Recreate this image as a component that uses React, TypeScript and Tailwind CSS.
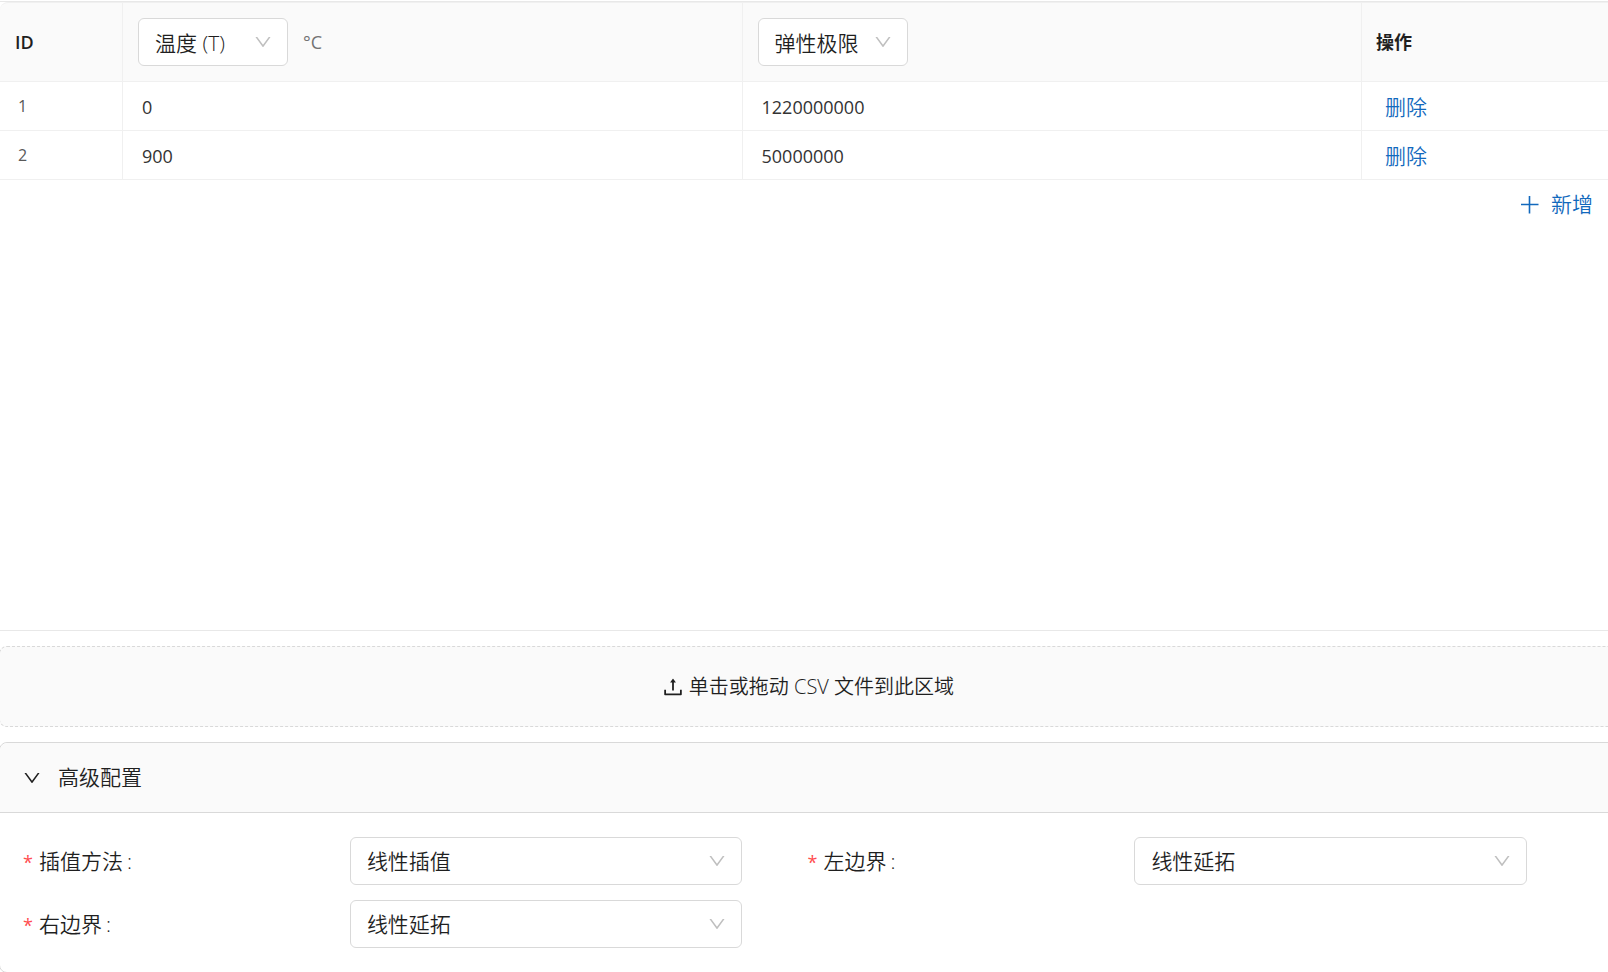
import { AiOutlineDown, AiOutlineUpload } from "react-icons/ai";

const rows = [
    { id: 1, x: "0", y: "1220000000" },
    { id: 2, x: "900", y: "50000000" },
];

interface SelectProps {
    id: string;
    label?: string;
    value: string;
    options: string[];
    className?: string;
}

function Select({ id, label, value, options, className = "" }: SelectProps) {
    return (
        <div className={`relative ${className}`}>
            <select
                id={id}
                aria-label={label}
                defaultValue={value}
                className="h-12 w-full appearance-none rounded-md border border-[#d9d9d9] bg-white pl-4 pr-10 pt-0.5 text-[21px] font-[350] text-[#1f1f1f]"
            >
                {options.map((option) => (
                    <option key={option}>{option}</option>
                ))}
            </select>
            <AiOutlineDown className="pointer-events-none absolute right-[15px] top-[14px] h-5 w-5 text-[#bfbfbf]" />
        </div>
    );
}

function Field({ id, label, value, options }: SelectProps) {
    return (
        <div className="flex items-center">
            <label htmlFor={id} className="flex w-5/12 items-center pt-0.5 text-[21px] font-[350]">
                <span className="mr-1 w-3 text-lg font-normal leading-4 text-[#ff4d4f]">*</span>
                {label}
                <span className="ml-1">:</span>
            </label>
            <Select id={id} value={value} options={options} className="w-1/2" />
        </div>
    );
}

function DataTable() {
    return (
        <table className="w-full table-fixed border-separate border-spacing-0 text-left">
            <colgroup>
                <col className="w-[123px]" />
                <col />
                <col />
                <col className="w-[246px]" />
            </colgroup>
            <thead className="text-lg">
                <tr className="h-20">
                    <th className="rounded-tl-lg border-y border-r border-[#f0f0f0] bg-[#fafafa] pl-[15px] font-semibold">ID</th>
                    <th className="border-y border-r border-[#f0f0f0] bg-[#fafafa] px-[15px] font-normal">
                        <div className="flex items-center gap-[15px]">
                            <Select id="x-axis" label="自变量" value="温度 (T)" options={["温度 (T)"]} className="w-[150px]" />
                            <span className="text-[#737373]">°C</span>
                        </div>
                    </th>
                    <th className="border-y border-r border-[#f0f0f0] bg-[#fafafa] px-[15px] font-normal">
                        <Select id="y-axis" label="因变量" value="弹性极限" options={["弹性极限"]} className="w-[150px]" />
                    </th>
                    <th className="border-y border-[#f0f0f0] bg-[#fafafa] pl-[14px] font-bold">操作</th>
                </tr>
            </thead>
            <tbody>
                {rows.map((row) => (
                    <tr key={row.id} className="h-[49px] text-lg">
                        <td className="border-b border-r border-[#f0f0f0] pl-[18px] text-base text-[#595959]">{row.id}</td>
                        <td className="border-b border-r border-[#f0f0f0] pl-[19px] pt-0.5">
                            <input aria-label={`自变量 ${row.id}`} defaultValue={row.x} className="block w-full text-[#333333]" />
                        </td>
                        <td className="border-b border-r border-[#f0f0f0] pl-[19px] pt-0.5">
                            <input aria-label={`因变量 ${row.id}`} defaultValue={row.y} className="block w-full text-[#333333]" />
                        </td>
                        <td className="border-b border-[#f0f0f0] pl-[23px] pt-0.5">
                            <button className="block text-[21px] font-[350] leading-8 text-[#1269bd]">删除</button>
                        </td>
                    </tr>
                ))}
            </tbody>
        </table>
    );
}

export default function App() {
    return (
        <div className="min-h-screen overflow-hidden bg-white font-['Open_Sans','Noto_Sans_CJK_SC',sans-serif] text-[#1f1f1f]">
            <div className="mt-px min-h-[630px] border-y border-[#e8e8e8]">
                <DataTable />
                <div className="flex justify-end pr-[15px]">
                    <button className="flex h-[50px] items-center gap-3 text-[21px] font-[350] text-[#1269bd]">
                        <svg className="h-[18px] w-[18px]" viewBox="0 0 18 18" fill="none" stroke="currentColor" strokeWidth="1.6">
                            <path d="M8.5 0V17.5M0 8.5H17.5" />
                        </svg>
                        新增
                    </button>
                </div>
            </div>
            {/* Both panels run past the window on each side, so only their left corners show */}
            <div className="-ml-px -mr-2 mt-[15px] flex flex-col gap-[15px]">
                <button className="flex h-[81px] items-center justify-center gap-1 rounded-lg border border-dashed border-[#d9d9d9] bg-[#fafafa] text-[20px] font-[350]">
                    <AiOutlineUpload className="h-6 w-6" />
                    单击或拖动 CSV 文件到此区域
                </button>
                <section className="rounded-lg border border-[#d9d9d9]">
                    <button className="flex h-[70px] w-full items-center gap-4 rounded-t-lg border-b border-[#d9d9d9] bg-[#fafafa] pl-[22px] text-[21px] font-[350]">
                        <AiOutlineDown className="h-5 w-5" />
                        高级配置
                    </button>
                    <div className="grid grid-cols-2 gap-y-[15px] pb-6 pl-[23px] pr-[23px] pt-6">
                        <Field id="method" label="插值方法" value="线性插值" options={["线性插值"]} />
                        <Field id="left" label="左边界" value="线性延拓" options={["线性延拓"]} />
                        <Field id="right" label="右边界" value="线性延拓" options={["线性延拓"]} />
                    </div>
                </section>
            </div>
        </div>
    );
}
